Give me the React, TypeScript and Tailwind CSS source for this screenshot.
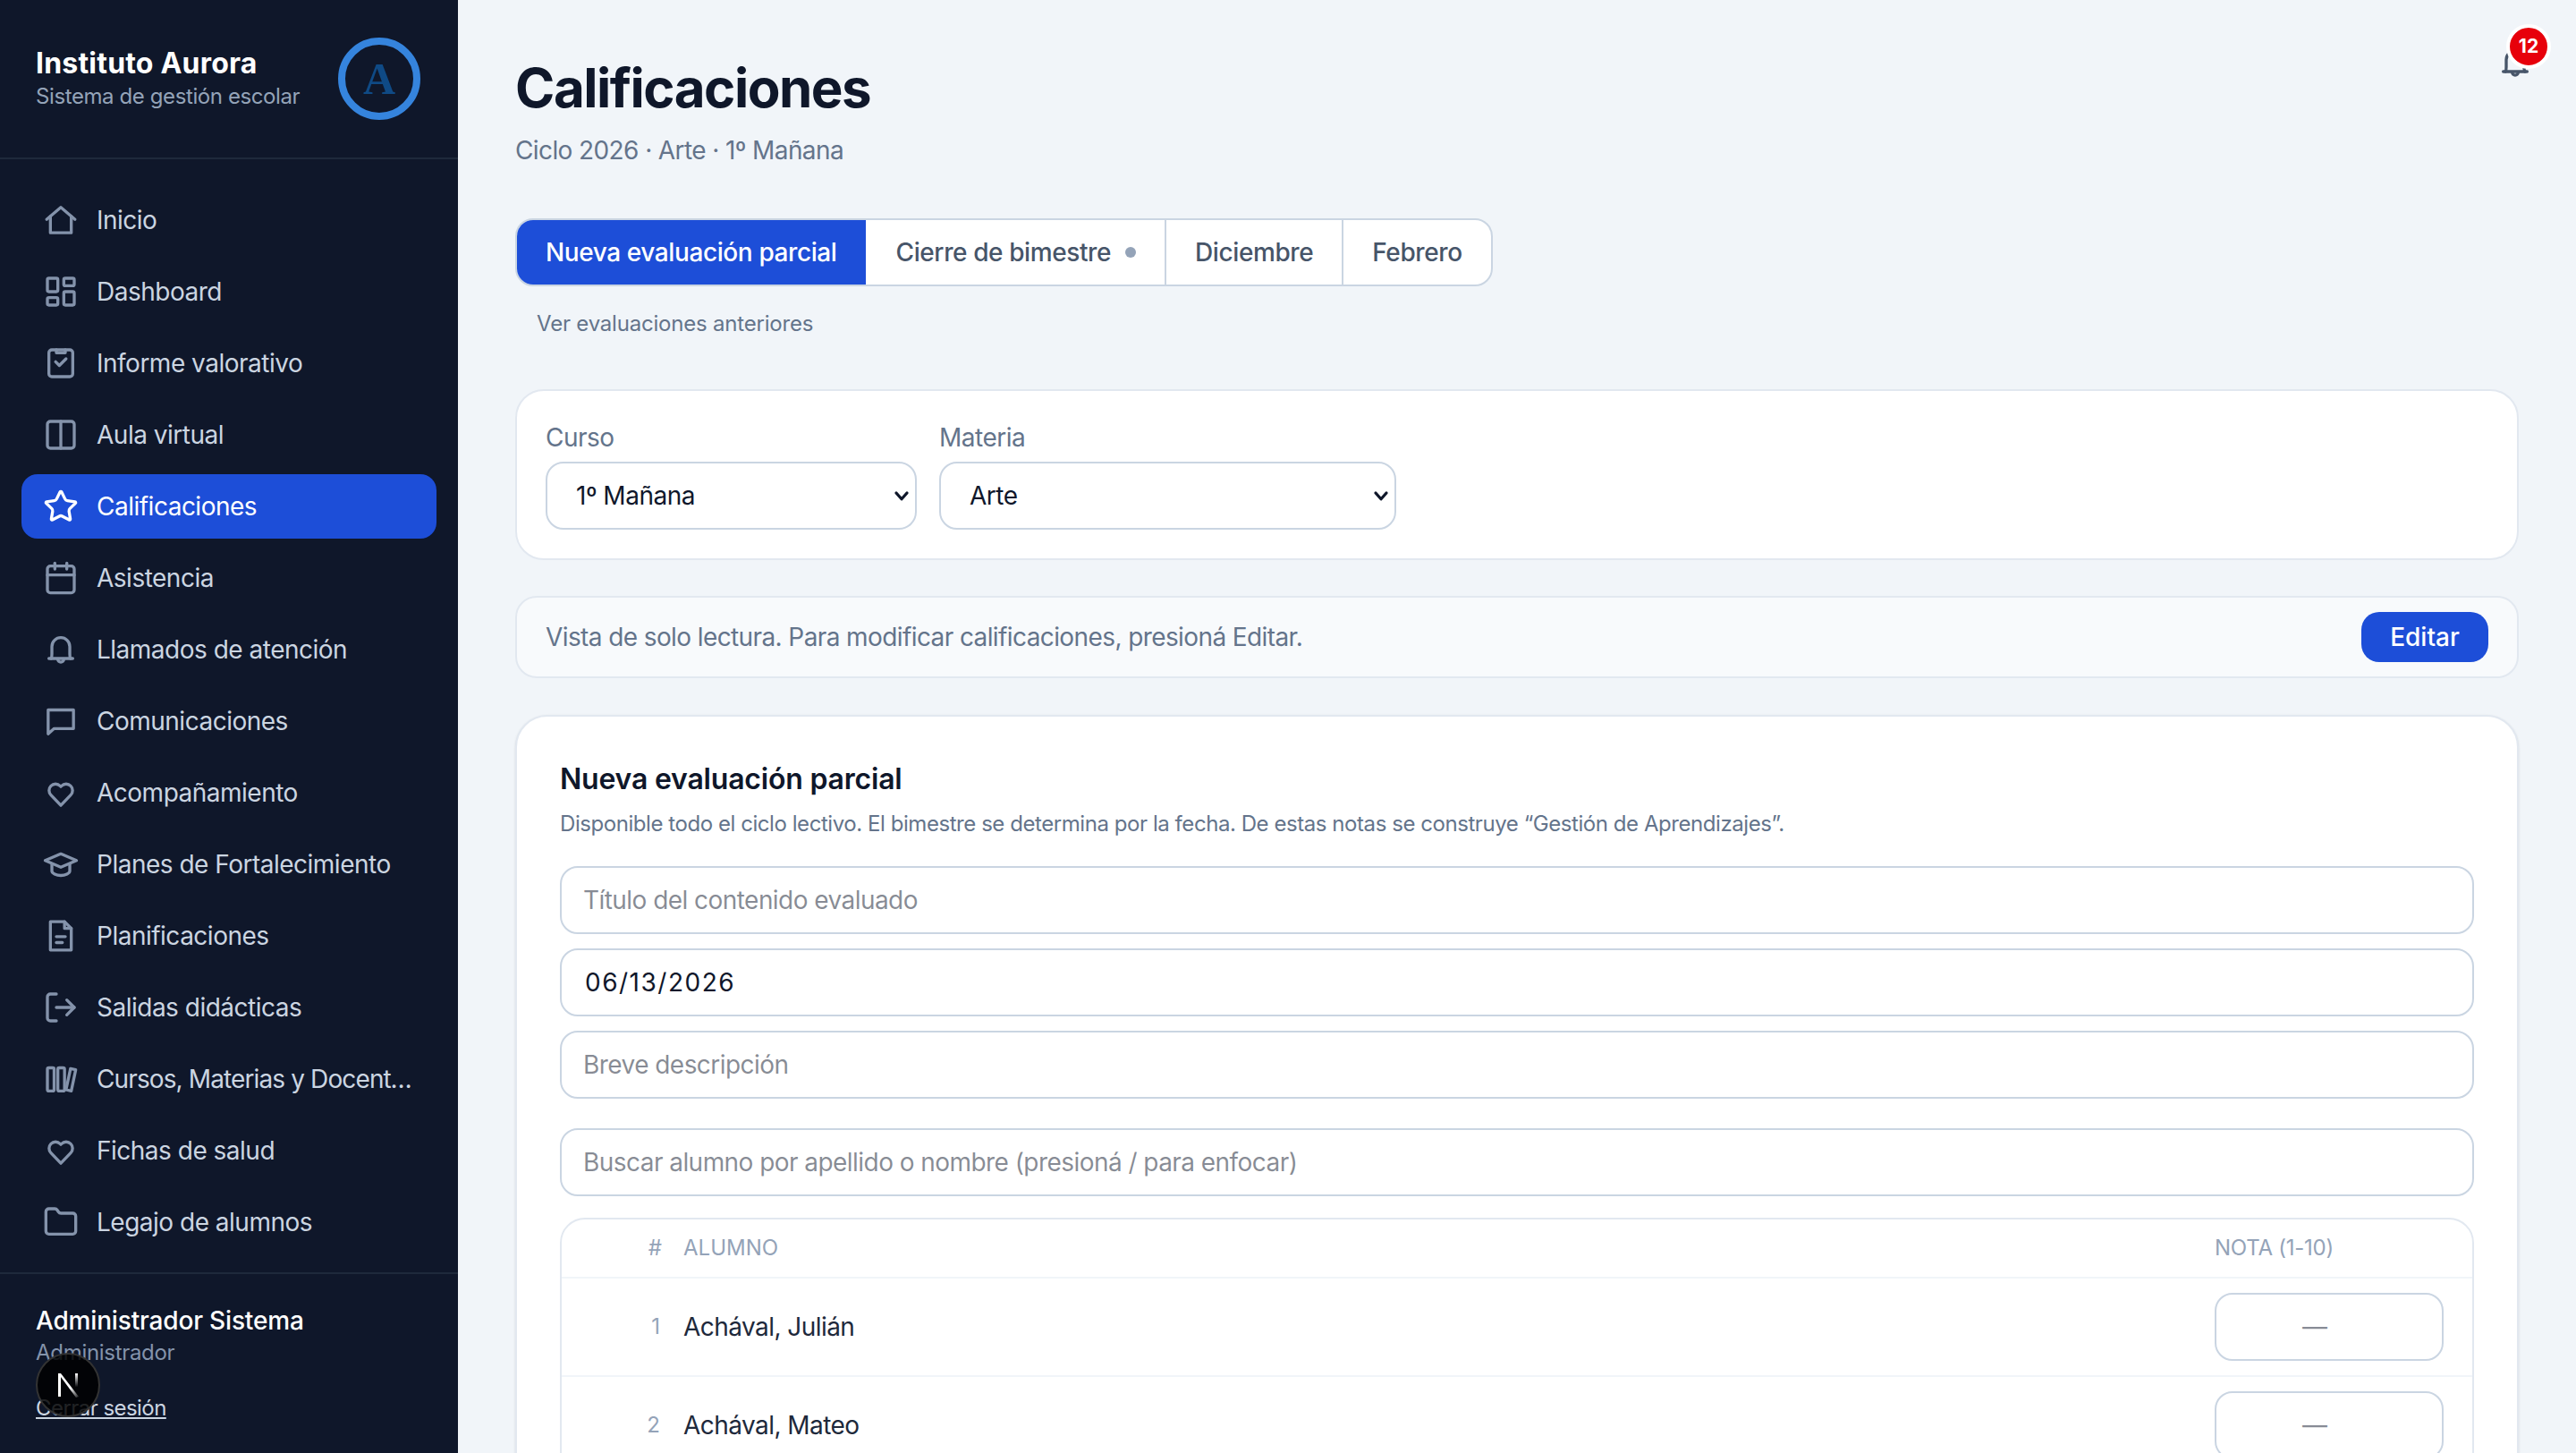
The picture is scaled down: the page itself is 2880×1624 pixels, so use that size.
import React from 'react';
import { LayoutDashboard, Columns2, Star, Calendar, LogOut, Folder } from 'lucide-react';

const svgProps = {
  viewBox: '0 0 24 24',
  fill: 'none',
  stroke: 'currentColor',
  strokeWidth: 2,
  strokeLinecap: 'round' as const,
  strokeLinejoin: 'round' as const,
  className: 'w-[40px] h-[40px] shrink-0',
};

const HomeIcon = () => (
  <svg {...svgProps}>
    <path d="M2.5 11.5 12 3.5l9.5 8" />
    <path d="M5 9.5v11h14v-11" />
  </svg>
);

const ClipboardIcon = () => (
  <svg {...svgProps}>
    <rect x="4" y="3" width="16" height="18" rx="2" />
    <path d="M9 3v2h6V3" />
    <path d="M8.5 11l2.5 2.5 4.5-4.5" />
  </svg>
);

const BellIcon = () => (
  <svg {...svgProps}>
    <path d="M5.5 18c.4-.6.5-1.5.5-3v-5a6 6 0 0 1 12 0v5c0 1.500.1 2.400.5 3" />
    <path d="M4 18h16" />
    <path d="M10 18.500a2 2 0 0 0 4 0" />
  </svg>
);

const ChatIcon = () => (
  <svg {...svgProps}>
    <path d="M3.500 4.500h17v12.500H7.500l-4 3.500z" />
  </svg>
);

const HeartIcon = () => (
  <svg {...svgProps}>
    <path d="M12 20.500 5.400 13.600a4.400 4.400 0 0 1 0-6.200 4.300 4.300 0 0 1 6.100 0l.5.5.5-.5a4.300 4.300 0 0 1 6.100 0 4.400 4.400 0 0 1 0 6.200z" />
  </svg>
);

const CapIcon = () => (
  <svg {...svgProps}>
    <path d="M1.500 9.500 12 5l10.500 4.500L12 14z" />
    <path d="M6 12v4.500c0 1.500 3 3 6 3s6-1.500 6-3V12" />
  </svg>
);

const DocIcon = () => (
  <svg {...svgProps}>
    <path d="M5 2.500h9.500l4.500 4.500v14.500H5z" />
    <path d="M14.500 2.500V7H19" />
    <path d="M9 12.500h6" />
    <path d="M9 16.500h4" />
  </svg>
);

const BooksIcon = () => (
  <svg {...svgProps}>
    <rect x="3" y="4.500" width="4.500" height="15.500" rx="1" />
    <rect x="10" y="4.500" width="4.500" height="15.500" rx="1" />
    <path d="M18.500 5l3.500.8-3 14.200-3.500-.8z" />
  </svg>
);

const navItems = [
  { label: 'Inicio', icon: <HomeIcon /> },
  { label: 'Dashboard', icon: <LayoutDashboard size={40} /> },
  { label: 'Informe valorativo', icon: <ClipboardIcon /> },
  { label: 'Aula virtual', icon: <Columns2 size={40} /> },
  { label: 'Calificaciones', icon: <Star size={40} />, active: true },
  { label: 'Asistencia', icon: <Calendar size={40} /> },
  { label: 'Llamados de atención', icon: <BellIcon /> },
  { label: 'Comunicaciones', icon: <ChatIcon /> },
  { label: 'Acompañamiento', icon: <HeartIcon /> },
  { label: 'Planes de Fortalecimiento', icon: <CapIcon /> },
  { label: 'Planificaciones', icon: <DocIcon /> },
  { label: 'Salidas didácticas', icon: <LogOut size={40} /> },
  { label: 'Cursos, Materias y Docentes', icon: <BooksIcon />, tight: true },
  { label: 'Fichas de salud', icon: <HeartIcon /> },
  { label: 'Legajo de alumnos', icon: <Folder size={40} /> },
];

const alumnos = ['Achával, Julián', 'Achával, Mateo'];

const Chevron = () => (
  <svg
    viewBox="0 0 12 12"
    fill="none"
    stroke="#0f172a"
    strokeWidth="2.200"
    strokeLinecap="round"
    strokeLinejoin="round"
    className="absolute right-[8px] top-[29px] w-[18px] h-[18px] pointer-events-none"
  >
    <path d="M2 4l4 4.500L10 4" />
  </svg>
);

const inputClass =
  'w-full h-[76px] border-2 border-slate-300 rounded-[20px] px-[24px] text-[28px] tracking-[-0.55px] text-slate-900 bg-white outline-none';

const selectClass =
  'appearance-none w-full h-[76px] border-2 border-slate-300 rounded-[20px] pl-[32px] text-[28px] tracking-[-0.5px] text-slate-900 bg-white';

const App = () => {
  return (
    <div className="relative flex h-screen overflow-hidden bg-[#f1f5f9] font-['Inter',sans-serif]">
      {/* Sidebar */}
      <aside className="w-[512px] shrink-0 h-full bg-[#0f172a] flex flex-col">
        <div className="h-[178px] shrink-0 border-b-2 border-[#1e293b] pl-[40px] pr-[42px] flex items-center justify-between">
          <div>
            <div className="text-[32px] leading-[40px] font-bold tracking-[0.2px] text-white">Instituto Aurora</div>
            <div className="text-[24px] leading-[34px] tracking-[-0.4px] text-[#94a3b8]">Sistema de gestión escolar</div>
          </div>
          <div className="w-[92px] h-[92px] rounded-full border-[8px] border-[#3584dd] flex items-center justify-center font-['Liberation_Serif',serif] font-bold text-[50px] text-[#0f4a85]">
            A
          </div>
        </div>

        <nav className="flex-1 pt-[32px] px-[24px] flex flex-col gap-[8px]">
          {navItems.map((item) => (
            <div
              key={item.label}
              className={
                item.active
                  ? 'h-[72px] rounded-[18px] bg-[#1d4ed8] text-white flex items-center gap-[20px] px-[24px]'
                  : 'h-[72px] rounded-[18px] text-[#cbd5e1] flex items-center gap-[20px] px-[24px]'
              }
            >
              <span className={item.active ? 'text-white shrink-0' : 'text-[#8493ab] shrink-0'}>{item.icon}</span>
              <span className={item.tight ? 'text-[28px] tracking-[-0.88px] truncate' : 'text-[28px] tracking-[-0.5px] truncate'}>
                {item.label}
              </span>
            </div>
          ))}
        </nav>

        <div className="h-[202px] shrink-0 border-t-2 border-[#1e293b] pl-[40px] pt-[32px]">
          <div className="text-[28px] leading-[40px] font-medium tracking-[-0.17px] text-white">Administrador Sistema</div>
          <div className="text-[24px] leading-[32px] tracking-[-0.3px] text-[#8493ab]">Administrador</div>
          <div className="mt-[30px] text-[24px] leading-[32px] tracking-[-0.55px] text-[#cbd5e1] underline">Cerrar sesión</div>
        </div>
      </aside>

      {/* Main */}
      <main className="relative flex-1 h-full overflow-hidden px-[64px] pt-[62px]">
        <div className="absolute right-[48px] top-[50px] text-[#475569]">
          <BellIcon />
          <span className="absolute left-[10px] top-[-23px] w-[50px] h-[50px] rounded-full bg-[#e7000b] border-[4px] border-white text-white text-[21px] font-bold flex items-center justify-center">
            12
          </span>
        </div>

        <h1 className="text-[60px] leading-[72px] font-bold tracking-[-1.5px] text-[#0f172a]">Calificaciones</h1>
        <p className="mt-[14px] text-[28px] leading-[40px] tracking-[-0.6px] text-[#64748b]">Ciclo 2026 · Arte · 1º Mañana</p>

        {/* Tabs */}
        <div className="mt-[56px] flex w-fit h-[76px] border-2 border-slate-300 rounded-[20px] overflow-hidden text-[28px] tracking-[-0.4px] bg-white">
          <div className="px-[32px] bg-[#1d4ed8] text-white font-medium flex items-center">Nueva evaluación parcial</div>
          <div className="px-[32px] text-[#475569] font-medium flex items-center gap-[16px] border-l-2 border-white">
            Cierre de bimestre
            <span className="w-[12px] h-[12px] rounded-full bg-[#94a3b8]" />
          </div>
          <div className="px-[32px] text-[#475569] font-medium flex items-center border-l-2 border-slate-300">Diciembre</div>
          <div className="px-[32px] text-[#475569] font-medium flex items-center border-l-2 border-slate-300">Febrero</div>
        </div>
        <div className="mt-[25px] pl-[24px] text-[24px] leading-[34px] tracking-[-0.2px] text-[#64748b]">Ver evaluaciones anteriores</div>

        {/* Filters */}
        <div className="mt-[56px] h-[191px] border-2 border-[#e2e8f0] rounded-[32px] bg-white px-[32px] pt-[34px] flex gap-[25px]">
          <div>
            <label className="block text-[28px] leading-[36px] tracking-[-0.5px] text-[#64748b] mb-[9px]">Curso</label>
            <div className="relative w-[415px]">
              <select className={selectClass}>
                <option>1º Mañana</option>
              </select>
              <Chevron />
            </div>
          </div>
          <div>
            <label className="block text-[28px] leading-[36px] tracking-[-0.5px] text-[#64748b] mb-[9px]">Materia</label>
            <div className="relative w-[511px]">
              <select className={selectClass}>
                <option>Arte</option>
              </select>
              <Chevron />
            </div>
          </div>
        </div>

        {/* Read-only bar */}
        <div className="mt-[40px] h-[92px] border-2 border-[#e2e8f0] rounded-[24px] bg-[#f8fafc] px-[32px] flex items-center justify-between">
          <span className="text-[28px] tracking-[-0.6px] text-[#64748b]">Vista de solo lectura. Para modificar calificaciones, presioná Editar.</span>
          <button className="w-[142px] h-[56px] rounded-[20px] bg-[#1d4ed8] text-white text-[28px] font-medium">Editar</button>
        </div>

        {/* Evaluation card */}
        <div className="mt-[41px] border-2 border-[#e2e8f0] rounded-[36px] bg-white shadow-sm px-[48px] pt-[48px] pb-[48px]">
          <h2 className="text-[32px] leading-[44px] font-semibold tracking-[-0.2px] text-[#0f172a]">Nueva evaluación parcial</h2>
          <p className="mt-[11px] text-[24px] leading-[34px] tracking-[-0.44px] text-[#64748b]">
            Disponible todo el ciclo lectivo. El bimestre se determina por la fecha. De estas notas se construye “Gestión de Aprendizajes”.
          </p>

          <div className="mt-[30px] flex flex-col gap-[16px]">
            <input className={inputClass} placeholder="Título del contenido evaluado" />
            <input className={`${inputClass} pl-[26px] tracking-[1.5px]`} defaultValue="06/13/2026" readOnly />
            <input className={inputClass} placeholder="Breve descripción" />
          </div>

          <input className={`${inputClass} mt-[33px]`} placeholder="Buscar alumno por apellido o nombre (presioná / para enfocar)" />

          <div className="mt-[24px] border-2 border-[#e2e8f0] rounded-[28px]">
            <div className="h-[66px] flex items-center border-b-2 border-[#f1f5f9] text-[24px] text-[#94a3b8]">
              <span className="w-[112px] text-right">#</span>
              <span className="ml-[24px] flex-1">ALUMNO</span>
              <span className="w-[288px] tracking-[-0.25px]">NOTA (1-10)</span>
            </div>
            {alumnos.map((nombre, i) => (
              <div key={nombre} className="h-[110px] flex items-center border-b-2 border-[#f1f5f9]">
                <span className="w-[110px] text-right text-[24px] text-[#94a3b8]">{i + 1}</span>
                <span className="ml-[26px] flex-1 text-[28px] tracking-[-0.55px] text-[#1e293b]">{nombre}</span>
                <input
                  className="w-[256px] h-[76px] mr-[32px] border-2 border-slate-300 rounded-[20px] pr-[32px] text-center text-[28px] text-slate-900 bg-white outline-none"
                  placeholder="—"
                />
              </div>
            ))}
          </div>
        </div>
      </main>

      {/* Dev indicator */}
      <div className="absolute left-[40px] top-[1512px] w-[72px] h-[72px] rounded-full bg-[rgba(0,0,0,0.84)] border-2 border-[#333] flex items-center justify-center">
        <svg viewBox="0 0 26 28" className="w-[26px] h-[28px]">
          <defs>
            <linearGradient id="nextFade" x1="0" y1="0" x2="0" y2="1">
              <stop offset="0" stopColor="#fff" />
              <stop offset="0.7" stopColor="#fff" stopOpacity="0" />
            </linearGradient>
            <linearGradient id="nextDiag" x1="0" y1="0" x2="1" y2="1">
              <stop offset="0.6" stopColor="#fff" />
              <stop offset="1" stopColor="#fff" stopOpacity="0.1" />
            </linearGradient>
          </defs>
          <path d="M2 1h3v26H2z" fill="#fff" />
          <path d="M2 1h3l20 26-3 1z" fill="url(#nextDiag)" />
          <path d="M21 1h3v22h-3z" fill="url(#nextFade)" />
        </svg>
      </div>
    </div>
  );
};

export default App;
